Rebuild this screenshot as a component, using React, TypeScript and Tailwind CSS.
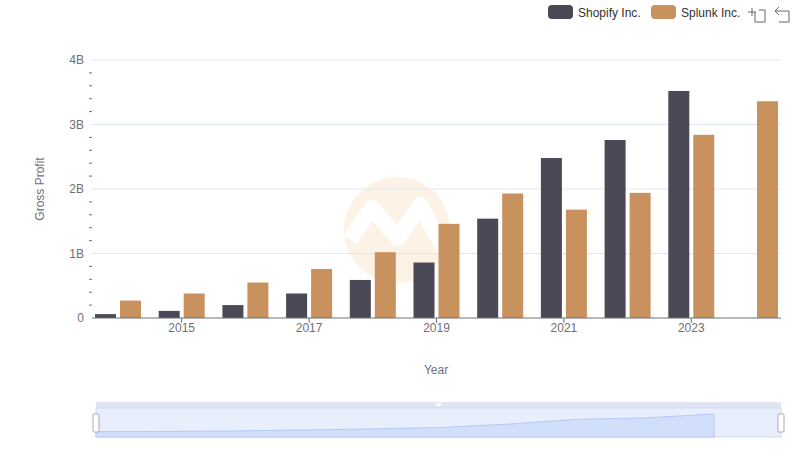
import React from "react";

const shop = [0.06, 0.11, 0.2, 0.38, 0.59, 0.86, 1.54, 2.48, 2.76, 3.52, null];
const splk = [0.27, 0.38, 0.55, 0.76, 1.02, 1.46, 1.93, 1.68, 1.94, 2.84, 3.36];
const X0 = 92, X1 = 781, Y0 = 318, PX = 64.5;
const cw = 63.7;

export default function App() {
  const ticks = [] as number[];
  for (let i = 0; i <= 20; i++) ticks.push(i);
  const pts = shop.map((v, i) => [96 + (i / 9) * 618, 432 - ((v ?? 3.52) / 3.52) * 18]).slice(0, 10);
  return (
    <div className="w-[800px] h-[461px] bg-white font-['Liberation_Sans',Arial,sans-serif]">
      <svg width="800" height="461" viewBox="0 0 800 461" fontFamily='"Liberation Sans", Arial, sans-serif'>
        <rect x="548" y="5" width="25" height="14" rx="4" fill="#4a4955" />
        <text x="578" y="17" fontSize="12" fill="#333">Shopify Inc.</text>
        <rect x="651" y="5" width="25" height="14" rx="4" fill="#c8915e" />
        <text x="681" y="17" fontSize="12" fill="#333">Splunk Inc.</text>
        <g stroke="#666" strokeWidth="1" fill="none">
          <path d="M748 12h8M752 8v8M755 12v10h10v-12h-6" />
          <path d="M779 7l-4 4 4 4M775 11h14v11h-10" />
        </g>
        <g>
          <circle cx="397" cy="230" r="53" fill="#fcf3e6" />
          <path d="M350 240 L372 208 L398 238 L420 205 L446 252" stroke="#fff" strokeWidth="16" fill="none" strokeLinejoin="round" />
        </g>
        {[1, 2, 3, 4].map((b) => (
          <line key={b} x1={X0} x2={X1} y1={Y0 - b * PX} y2={Y0 - b * PX} stroke="#e0e6f1" />
        ))}
        {ticks.map((t) => (t % 5 !== 0 ? <line key={t} x1="89" x2="92" y1={Y0 - (t * PX) / 5} y2={Y0 - (t * PX) / 5} stroke="#6e7079" /> : null))}
        {["0", "1B", "2B", "3B", "4B"].map((l, i) => (
          <text key={l} x="84" y={Y0 - i * PX + 4} fontSize="12" fill="#6e7079" textAnchor="end">{l}</text>
        ))}
        <text transform="translate(44 189) rotate(-90)" fontSize="12" fill="#6e7079" textAnchor="middle">Gross Profit</text>
        {shop.map((v, i) => (v ? <rect key={"s" + i} x={X0 + i * cw + 3} y={Y0 - v * PX} width="21" height={v * PX} fill="#4a4955" /> : null))}
        {splk.map((v, i) => (
          <rect key={"p" + i} x={X0 + i * cw + 28} y={Y0 - v * PX} width="21" height={v * PX} fill="#c8915e" />
        ))}
        <line x1={X0} x2={X1} y1={Y0} y2={Y0} stroke="#6e7079" />
        {[1, 3, 5, 7, 9].map((i) => (
          <g key={i}>
            <line x1={X0 + i * cw + 26} x2={X0 + i * cw + 26} y1={Y0} y2={Y0 + 5} stroke="#6e7079" />
            <text x={X0 + i * cw + 26} y="332" fontSize="12" fill="#6e7079" textAnchor="middle">{2014 + i}</text>
          </g>
        ))}
        <text x="436" y="374" fontSize="12" fill="#6e7079" textAnchor="middle">Year</text>
        <rect x="96" y="402" width="685" height="6" fill="#dfe5f3" />
        <rect x="436" y="403" width="5" height="3" fill="#fff" opacity="0.8" />
        <rect x="96" y="408" width="685" height="29" fill="#e8eefc" stroke="#d2dbee" />
        <path d={`M96 437 L${pts.map((p) => p.join(" ")).join(" L")} L714 437 Z`} fill="#d2dffb" stroke="#a9c0f5" strokeWidth="0.8" />
        <rect x="93" y="414" width="6" height="18" rx="1" fill="#fff" stroke="#aab" />
        <rect x="778" y="414" width="6" height="18" rx="1" fill="#fff" stroke="#aab" />
      </svg>
    </div>
  );
}
